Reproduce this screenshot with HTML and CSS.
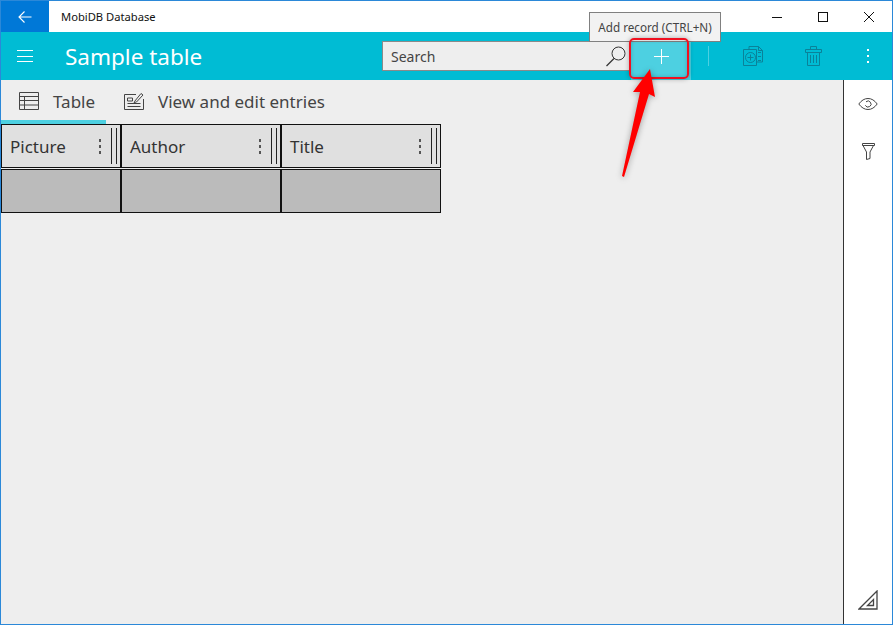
FILE: index.html
```html
<!DOCTYPE html>
<html lang="en">
<head>
<meta charset="utf-8">
<title>MobiDB Database</title>
<link rel="stylesheet" href="styles.css">
</head>
<body>
<div class="window">
  <header class="titlebar">
    <button class="back" aria-label="Back">
      <svg width="16" height="16" viewBox="0 0 16 16"><path d="M14.5 8H2M7.5 2.5 2 8l5.5 5.5" fill="none" stroke="#fff" stroke-width="1.1"/></svg>
    </button>
    <span class="app-name">MobiDB Database</span>
    <div class="win-controls">
      <span class="win-btn"><svg width="12" height="12" viewBox="0 0 12 12"><path d="M1 6.5h10" stroke="#111" stroke-width="1"/></svg></span>
      <span class="win-btn"><svg width="12" height="12" viewBox="0 0 12 12"><rect x="1.5" y="1.5" width="9" height="9" fill="none" stroke="#111" stroke-width="1"/></svg></span>
      <span class="win-btn"><svg width="12" height="12" viewBox="0 0 12 12"><path d="M1 1l10 10M11 1 1 11" stroke="#111" stroke-width="1"/></svg></span>
    </div>
  </header>

  <div class="toolbar">
    <button class="hamburger" aria-label="Menu">
      <svg width="16" height="12" viewBox="0 0 16 12"><path d="M0 .5h16M0 6.500h16M0 11.500h16" stroke="#fff" stroke-width="1"/></svg>
    </button>
    <h1 class="page-title">Sample table</h1>
    <div class="search">
      <span class="search-text">Search</span>
      <svg class="search-icon" width="22" height="22" viewBox="0 0 22 22"><circle cx="13.500" cy="8.500" r="6.500" fill="none" stroke="#333" stroke-width="1"/><path d="M9 13.500 1.500 21" stroke="#333" stroke-width="1.200"/></svg>
    </div>
    <button class="tool add" aria-label="Add record">
      <svg width="15" height="15" viewBox="0 0 15 15"><path d="M7.500 0v15M0 7.500h15" stroke="#fff" stroke-width="1"/></svg>
    </button>
    <span class="sep-slot"><span class="sep"></span></span>
    <button class="tool" aria-label="Duplicate">
      <svg width="20" height="20" viewBox="0 0 20 20" fill="none" stroke="#0a8299" stroke-width="1"><path d="M6 3.500V.5h9.500l4 4v11.500h-6"/><path d="M.5 3.500h13v16H.5z"/><circle cx="7.500" cy="11.500" r="5"/><path d="M7.500 8.500v6M4.500 11.500h6M15 6.500h3M15 10.500h3M15 14.500h3M15.500.5v4h4"/></svg>
    </button>
    <button class="tool" aria-label="Delete">
      <svg width="18" height="20" viewBox="0 0 18 20" fill="none" stroke="#0a8299" stroke-width="1"><path d="M1.500 3.500h16v3h-16zM6.500 3.500v-3h6v3M3.500 6.500v13h12v-13M6.500 9v8M9.500 9v8M12.500 9v8"/></svg>
    </button>
    <button class="more" aria-label="More">
      <span class="dot"></span><span class="dot"></span><span class="dot"></span>
    </button>
  </div>

  <div class="body">
    <main class="content">
      <nav class="tabs">
        <div class="tab active">
          <svg width="20" height="18" viewBox="0 0 20 18" fill="none" stroke="#444" stroke-width="1"><path d="M.5.500h19v17H.5zM.5 4.500h19M.5 8.500h19M.5 13h19M5.500 4.500v13"/></svg>
          <span>Table</span>
        </div>
        <div class="tab">
          <svg width="20" height="18" viewBox="0 0 20 18" fill="none" stroke="#444" stroke-width="1"><path d="M12 2.500H.5v15h19V7"/><path d="M3.500 6h5v3h-5zM3.500 11.500h13M3.500 14.500h13M10.500 9.500 17 1.500l2 1.500-6.500 7-2.500.5z"/></svg>
          <span>View and edit entries</span>
        </div>
      </nav>
      <div class="grid">
        <div class="head-row">
          <div class="head-cell w-small"><span class="col-name">Picture</span><span class="kebab"><i></i><i></i><i></i></span><span class="grip"></span></div>
          <div class="head-cell w-large"><span class="col-name">Author</span><span class="kebab"><i></i><i></i><i></i></span><span class="grip"></span></div>
          <div class="head-cell w-large"><span class="col-name">Title</span><span class="kebab"><i></i><i></i><i></i></span><span class="grip"></span></div>
        </div>
        <div class="data-row">
          <div class="data-cell w-small"></div>
          <div class="data-cell w-large"></div>
          <div class="data-cell w-large"></div>
        </div>
      </div>
    </main>
    <aside class="side">
      <svg width="20" height="12" viewBox="0 0 20 12" fill="none" stroke="#444" stroke-width="1"><path d="M.8 6C3.500 2.300 6.500.5 10 .5s6.500 1.800 9.200 5.500c-2.700 3.700-5.700 5.500-9.200 5.500S3.500 9.700.8 6z"/><path d="M8 3.800A3 3 0 1 1 7.300 7.300"/></svg>
      <svg class="funnel" width="13" height="17" viewBox="0 0 13 17" fill="none" stroke="#444" stroke-width="1"><path d="M.5.500h12v2H.5zM1 2.500l3.500 6.500v7.500l3.500-1V9l3.500-6.500"/></svg>
      <svg class="ruler" width="20" height="20" viewBox="0 0 20 20" fill="none" stroke="#444" stroke-width="1.300"><path d="M19 1v18H1z"/><path d="M15.500 9.500v6h-6z"/></svg>
    </aside>
  </div>

  <div class="tooltip">Add record (CTRL+N)</div>
  <div class="highlight"></div>
  <svg class="arrow" width="50" height="120" viewBox="0 0 50 120"><polygon points="31,1 36,29 30,26 5,109 3,108 21,24 14,24" fill="#ff0000"/></svg>
</div>
</body>
</html>
```

FILE: styles.css
```css
* { box-sizing: border-box; }
html, body { margin: 0; height: 100%; }
body { font-family: "Noto Sans", "Open Sans", sans-serif; color: #333; overflow: hidden; }
button { border: 0; background: none; padding: 0; margin: 0; display: flex; align-items: center; justify-content: center; font: inherit; }

.window { position: relative; width: 893px; height: 625px; border: 1px solid #2b88d8; display: flex; flex-direction: column; background: #eee; }

.titlebar { height: 31px; background: #fff; display: flex; align-items: center; flex: none; }
.back { width: 48px; height: 31px; background: #0078d7; }
.app-name { margin-left: 12px; font-size: 11.2px; color: #111; }
.win-controls { margin-left: auto; display: flex; }
.win-btn { width: 46px; height: 31px; display: flex; align-items: center; justify-content: center; }

.toolbar { height: 48px; background: #00bcd4; display: flex; align-items: center; flex: none; }
.hamburger { width: 48px; height: 48px; }
.page-title { flex: 1; margin: 0 0 0 16px; font-size: 22.500px; font-weight: 400; color: #fff; }
.search { width: 249px; height: 30px; background: #eee; border: 1px solid #8a8a8a; display: flex; align-items: center; justify-content: space-between; padding: 0 3px 0 8px; }
.search-text { font-size: 14px; color: #444; }
.tool { width: 60px; height: 48px; }
.tool.add { background: #4dd0e1; }
.sep-slot { width: 32px; padding-left: 2px; display: flex; justify-content: center; }
.sep { width: 1px; height: 20px; background: #4dd0e1; }
.more { width: 49px; height: 48px; flex-direction: column; gap: 4px; }
.dot { width: 2px; height: 2px; background: #fff; }

.body { flex: 1; display: flex; min-height: 0; }
.content { flex: 1; min-width: 0; }
.tabs { display: flex; height: 44px; }
.tab { display: flex; align-items: center; gap: 14px; font-size: 17px; color: #444; padding: 2px 0 4px 18px; }
.tab.active { width: 105px; border-bottom: 4px solid #4dd0e1; padding-bottom: 0; }

.grid { display: flex; flex-direction: column; gap: 1px; }
.head-row, .data-row { display: flex; height: 44px; }
.w-small { width: 120px; }
.w-large { width: 160px; }
.head-cell { display: flex; align-items: center; background: #e0e0e0; border: 1px solid #111; padding-left: 8px; font-size: 17px; color: #333; }
.col-name { flex: 1; }
.kebab { display: flex; flex-direction: column; gap: 3px; margin-right: 10px; }
.kebab i { width: 2px; height: 3px; background: #555; display: block; }
.grip { width: 6px; height: 36px; border-left: 1px solid #222; border-right: 1px solid #222; margin-right: 3px; }
.data-cell { background: #bbb; border: 1px solid #111; }

.side { width: 49px; background: #fff; border-left: 1px solid #333; display: flex; flex-direction: column; align-items: center; padding-top: 18px; }
.funnel { margin-top: 33px; }
.ruler { margin-top: auto; margin-bottom: 14px; }

.tooltip { position: absolute; left: 588px; top: 11px; width: 132px; height: 30px; background: #f2f2f2; border: 1px solid #808080; font-size: 11.700px; color: #444; display: flex; align-items: center; justify-content: center; }
.highlight { position: absolute; left: 628px; top: 37px; width: 60px; height: 41px; border: 2px solid #f01020; border-radius: 5px; box-shadow: 0 0 5px rgba(0,0,0,.3), inset 0 0 4px rgba(0,0,0,.2); }
.arrow { position: absolute; left: 618px; top: 67px; filter: drop-shadow(0 1px 3px rgba(0,0,0,.35)); }
```
